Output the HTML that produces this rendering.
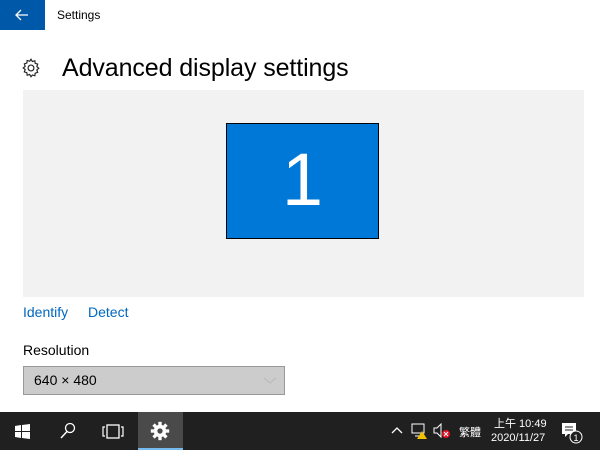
<!DOCTYPE html><html><head><style>
*{margin:0;padding:0;box-sizing:border-box}
body{width:600px;height:450px;background:#fff;font-family:"Liberation Sans","Noto Sans CJK TC",sans-serif;position:relative;overflow:hidden}
.a{position:absolute}
</style></head><body>
<div class="a" style="left:0;top:0;width:45px;height:30px;background:#0058a8"></div>
<svg class="a" style="left:14px;top:8px" width="16" height="14"><path d="M2 7H14M7 2L2 7L7 12" stroke="#fff" stroke-width="1.3" fill="none"/></svg>
<div class="a" style="left:57px;top:8px;font-size:12px;color:#000">Settings</div>
<svg class="a" style="left:21px;top:58px" width="20" height="20" viewBox="0 0 24 24"><path d="M12 1.5l1.6 2.7 3-.9.4 3.1 3 .9-1 3 2.3 2-2.3 2 1 3-3 .9-.4 3.1-3-.9L12 22.5l-1.6-2.7-3 .9-.4-3.1-3-.9 1-3L2.7 12 5 10l-1-3 3-.9.4-3.1 3 .9z" fill="none" stroke="#222" stroke-width="1.4"/><circle cx="12" cy="12" r="3.5" fill="none" stroke="#222" stroke-width="1.4"/></svg>
<div class="a" style="left:62px;top:54px;font-size:25px;color:#000;letter-spacing:-0.1px">Advanced display settings</div>
<div class="a" style="left:23px;top:90px;width:561px;height:207px;background:#f2f2f2"></div>
<div class="a" style="left:226px;top:123px;width:153px;height:116px;background:#0078d7;border:1px solid #000;color:#fff;font-size:74px;text-align:center;line-height:112px;-webkit-text-stroke:0;font-weight:normal">1</div>
<div class="a" style="left:23px;top:304px;font-size:14px;color:#0067c0">Identify</div>
<div class="a" style="left:88px;top:304px;font-size:14px;color:#0067c0">Detect</div>
<div class="a" style="left:23px;top:342px;font-size:14px;color:#000">Resolution</div>
<div class="a" style="left:23px;top:366px;width:262px;height:29px;background:#ccc;border:1px solid #999;font-size:14px;padding:5px 10px">640 × 480</div>
<svg class="a" style="left:263px;top:377px" width="14" height="8"><path d="M1 1L7 6L13 1" stroke="#b8b8b8" fill="none"/></svg>
<div class="a" style="left:0;top:412px;width:600px;height:38px;background:#202020"></div>
<svg class="a" style="left:15px;top:424px" width="15" height="15"><path d="M0 2L6 1V7H0ZM7 1L15 0V7H7ZM0 8H6V14L0 13ZM7 8H15V15L7 14Z" fill="#fff"/></svg>
<svg class="a" style="left:60px;top:422px" width="16" height="18"><circle cx="10" cy="6" r="4.5" stroke="#fff" stroke-width="1.3" fill="none"/><path d="M7 9.5L1 16" stroke="#fff" stroke-width="1.5"/></svg>
<svg class="a" style="left:102px;top:424px" width="22" height="15"><rect x="5" y="1" width="12" height="13" stroke="#fff" stroke-width="1.3" fill="none"/><path d="M3 3H1V12H3M19 3H21V12H19" stroke="#fff" stroke-width="1.2" fill="none"/></svg>
<div class="a" style="left:138px;top:412px;width:45px;height:38px;background:#4a4a4a;border-bottom:2px solid #76b9ed"></div>
<svg class="a" style="left:150px;top:421px" width="20" height="20" viewBox="0 0 24 24"><circle cx="12" cy="12" r="7.5" fill="#fff"/><g fill="#fff"><rect x="10" y="1" width="4" height="22"/><rect x="1" y="10" width="22" height="4"/><rect x="10" y="1" width="4" height="22" transform="rotate(45 12 12)"/><rect x="10" y="1" width="4" height="22" transform="rotate(-45 12 12)"/></g><circle cx="12" cy="12" r="3.2" fill="#4a4a4a"/></svg>
<svg class="a" style="left:391px;top:426px" width="12" height="8"><path d="M1 7L6 2L11 7" stroke="#fff" stroke-width="1.3" fill="none"/></svg>
<svg class="a" style="left:410px;top:422px" width="18" height="18"><rect x="2" y="2" width="12" height="9" stroke="#fff" fill="none"/><path d="M5 14H11" stroke="#fff"/><path d="M12 9L17 17H7Z" fill="#f2c200"/></svg>
<svg class="a" style="left:433px;top:423px" width="18" height="16"><path d="M1 5H4L8 1V14L4 10H1Z" stroke="#fff" fill="none"/><circle cx="13" cy="11" r="4" fill="#e81123"/><path d="M11 9L15 13M15 9L11 13" stroke="#fff"/></svg>
<div class="a" style="left:459px;top:424px;font-size:11px;color:#fff">繁體</div>
<div class="a" style="left:494px;top:415px;font-size:11px;color:#fff">上午 10:49</div>
<div class="a" style="left:491px;top:432px;font-size:11px;color:#fff">2020/11/27</div>
<svg class="a" style="left:560px;top:421px" width="24" height="24"><path d="M2 2H16V13H8L5 16V13H2Z" fill="#fff"/><path d="M5 6H13M5 9H13" stroke="#202020"/><circle cx="16" cy="16" r="6" fill="#202020" stroke="#fff"/><text x="16" y="20" font-size="9" fill="#fff" text-anchor="middle" font-family="Liberation Sans">1</text></svg>
</body></html>
